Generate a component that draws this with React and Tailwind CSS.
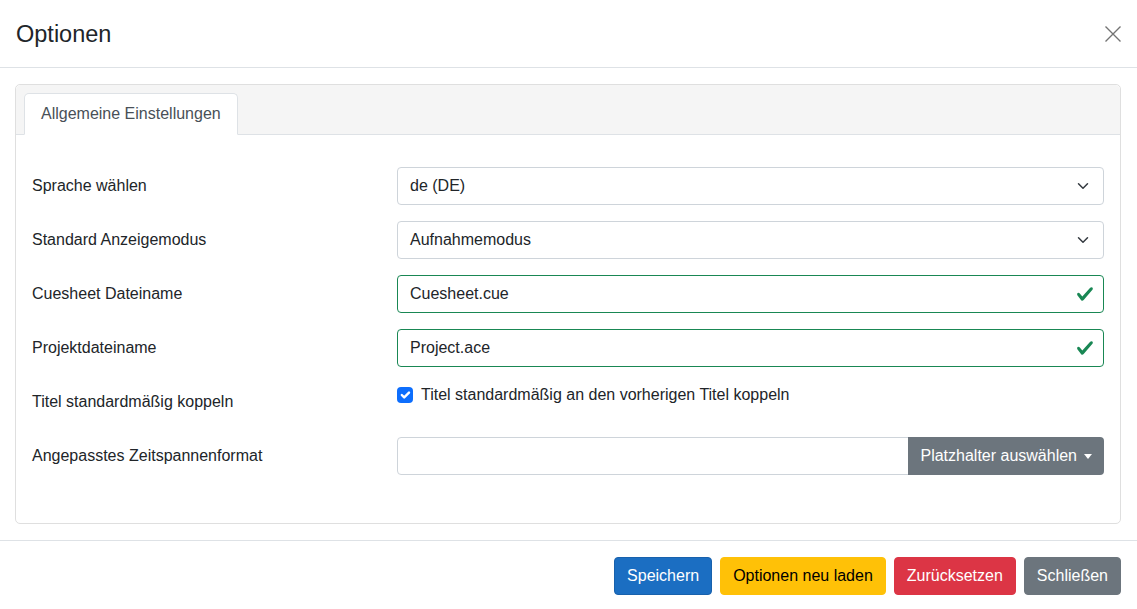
import React from 'react';

const Chevron = () => (
  <svg className="w-4 h-3 shrink-0" viewBox="0 0 16 16" fill="none">
    <path d="m2 5 6 6 6-6" stroke="#343a40" strokeWidth="2" strokeLinecap="round" strokeLinejoin="round" />
  </svg>
);

const ValidCheck = () => (
  <svg className="w-[18px] h-[18px] shrink-0" viewBox="0 0 8 8">
    <path
      fill="#198754"
      d="M2.3 6.73.6 4.53c-.4-1.04.46-1.4 1.1-.8l1.1 1.4 3.4-3.8c.6-.63 1.6-.27 1.2.7l-4 4.6c-.43.5-.8.4-1.1.1z"
    />
  </svg>
);

const FormRow = ({ label, children }) => (
  <div className="flex mb-4">
    <label className="w-[365px] shrink-0 pt-[7px] pb-[7px] leading-6">{label}</label>
    <div className="flex-1 min-w-0">{children}</div>
  </div>
);

const SelectBox = ({ value }) => (
  <div className="h-[38px] border border-[#ced4da] rounded-[4px] bg-white flex items-center justify-between pl-3 pr-3">
    <span>{value}</span>
    <Chevron />
  </div>
);

const ValidInput = ({ value }) => (
  <div className="h-[38px] border border-[#198754] rounded-[4px] bg-white flex items-center justify-between pl-3 pr-[9px]">
    <span>{value}</span>
    <ValidCheck />
  </div>
);

export default function App() {
  return (
    <div
      className="w-[1137px] h-[609px] bg-white text-[#212529] text-base overflow-hidden"
      style={{ fontFamily: '"Liberation Sans", Arial, sans-serif' }}
    >
      {/* Header */}
      <div className="h-[68px] flex items-center justify-between pl-4 pr-4 border-b border-[#dee2e6]">
        <h5 className="text-[23.5px] leading-[30px] font-normal">Optionen</h5>
        <button className="w-4 h-4 flex items-center justify-center">
          <svg className="w-4 h-4" viewBox="0 0 16 16">
            <path d="M.5.5 15.5 15.5M15.5.5.5 15.5" stroke="#000" strokeOpacity="0.55" strokeWidth="1.4" />
          </svg>
        </button>
      </div>

      {/* Body */}
      <div className="pl-[15px] pr-4 py-4">
        <div className="border border-[#dfdfdf] rounded-[5px]">
          <div className="bg-[#f5f5f5] border-b border-[#dee2e6] rounded-t-[5px] px-2 pt-2">
            <div className="flex -mb-px">
              <div className="bg-white border border-[#dee2e6] border-b-white rounded-t-[5px] px-4 py-2 leading-6 text-[#495057]">
                Allgemeine Einstellungen
              </div>
            </div>
          </div>
          <div className="p-4 pt-8 pb-8">
            <FormRow label="Sprache wählen">
              <SelectBox value="de (DE)" />
            </FormRow>
            <FormRow label="Standard Anzeigemodus">
              <SelectBox value="Aufnahmemodus" />
            </FormRow>
            <FormRow label="Cuesheet Dateiname">
              <ValidInput value="Cuesheet.cue" />
            </FormRow>
            <FormRow label="Projektdateiname">
              <ValidInput value="Project.ace" />
            </FormRow>
            <FormRow label="Titel standardmäßig koppeln">
              <div className="flex items-start leading-6">
                <span className="mt-1 w-4 h-4 rounded-[4px] bg-[#0d6efd] flex items-center justify-center shrink-0">
                  <svg className="w-4 h-4" viewBox="0 0 20 20" fill="none">
                    <path d="m6 10 3 3 6-6" stroke="#fff" strokeWidth="3" strokeLinecap="round" strokeLinejoin="round" />
                  </svg>
                </span>
                <span className="ml-2">Titel standardmäßig an den vorherigen Titel koppeln</span>
              </div>
            </FormRow>
            <FormRow label="Angepasstes Zeitspannenformat">
              <div className="flex h-[38px]">
                <div className="flex-1 border border-[#ced4da] rounded-l-[4px] bg-white" />
                <button className="bg-[#6c757d] text-white rounded-r-[4px] px-3 flex items-center -ml-px">
                  Platzhalter auswählen
                  <span className="ml-[7px] w-0 h-0 border-t-[5px] border-t-white border-x-[4.5px] border-x-transparent" />
                </button>
              </div>
            </FormRow>
          </div>
        </div>
      </div>

      {/* Footer */}
      <div className="border-t border-[#dee2e6] px-3 py-3 flex justify-end">
        <div className="flex gap-2 px-1 py-1">
          <button className="h-[38px] px-3 rounded-[4px] bg-[#1b6ec2] border border-[#1861ac] text-white">Speichern</button>
          <button className="h-[38px] px-3 rounded-[4px] bg-[#ffc107] border border-[#ffc107] text-black">Optionen neu laden</button>
          <button className="h-[38px] px-3 rounded-[4px] bg-[#dc3545] border border-[#dc3545] text-white">Zurücksetzen</button>
          <button className="h-[38px] px-3 rounded-[4px] bg-[#6c757d] border border-[#6c757d] text-white">Schließen</button>
        </div>
      </div>
    </div>
  );
}
